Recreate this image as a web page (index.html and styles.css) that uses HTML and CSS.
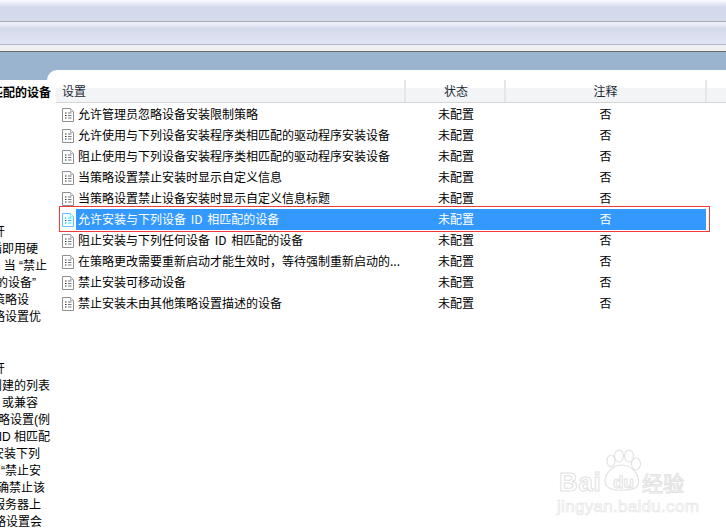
FILE: index.html
```html
<!DOCTYPE html>
<html lang="zh-CN">
<head>
<meta charset="utf-8">
<title>设备安装限制</title>
<link rel="stylesheet" href="styles.css">
</head>
<body>
<svg class="defs" width="0" height="0" aria-hidden="true">
  <symbol id="doc" viewBox="0 0 12 14">
    <path d="M.5.5H8.5L11.5 3.5V13.5H.5Z" fill="#fff" stroke="#8f8f8f"/>
    <path d="M8.5.5V3.5H11.5" fill="#e8e8e8" stroke="#b5b5b5"/>
    <path d="M3 5h1.5M3 7.5h1.5M3 10h1.5" stroke="#333"/>
    <path d="M6 5h3.5M6 7.5h3.5M6 10h3.5" stroke="#777"/>
  </symbol>
</svg>
<div class="toolbar-top"></div>
<div class="toolbar-sub"></div>
<div class="strip"></div>
<div class="band"></div>
<div class="content">
  <aside class="left">
    <h2 class="ln lead w51">相匹配的设备</h2>
    <div class="ln w5 gap-a">开</div>
    <div class="ln w38">插即用硬</div>
    <div class="ln w47">当 “禁止</div>
    <div class="ln w36">的设备”</div>
    <div class="ln w29">策略设</div>
    <div class="ln w41">略设置优</div>
    <div class="ln w5 gap-b">开</div>
    <div class="ln w50">创建的列表</div>
    <div class="ln w38">或兼容</div>
    <div class="ln w50">略设置(例</div>
    <div class="ln w50">ID 相匹配</div>
    <div class="ln w40">安装下列</div>
    <div class="ln w41">“禁止安</div>
    <div class="ln w45">确禁止该</div>
    <div class="ln w41">服务器上</div>
    <div class="ln w42">略设置会</div>
  </aside>
  <main class="right">
    <div class="head">
      <div class="hcell hname">设置</div>
      <div class="hcell hmid">状态</div>
      <div class="hcell hnote">注释</div>
      <div class="hcell"></div>
    </div>
    <div class="row"><div class="name"><svg class="doc"><use href="#doc"/></svg><span class="txt">允许管理员忽略设备安装限制策略</span></div><div class="val">未配置</div><div class="val">否</div></div>
    <div class="row"><div class="name"><svg class="doc"><use href="#doc"/></svg><span class="txt">允许使用与下列设备安装程序类相匹配的驱动程序安装设备</span></div><div class="val">未配置</div><div class="val">否</div></div>
    <div class="row"><div class="name"><svg class="doc"><use href="#doc"/></svg><span class="txt">阻止使用与下列设备安装程序类相匹配的驱动程序安装设备</span></div><div class="val">未配置</div><div class="val">否</div></div>
    <div class="row"><div class="name"><svg class="doc"><use href="#doc"/></svg><span class="txt">当策略设置禁止安装时显示自定义信息</span></div><div class="val">未配置</div><div class="val">否</div></div>
    <div class="row"><div class="name"><svg class="doc"><use href="#doc"/></svg><span class="txt">当策略设置禁止设备安装时显示自定义信息标题</span></div><div class="val">未配置</div><div class="val">否</div></div>
    <div class="row selected">
      <div class="name"><svg class="doc"><use href="#doc"/></svg><span class="txt">允许安装与下列设备 ID 相匹配的设备</span></div><div class="val">未配置</div><div class="val">否</div>
      <div class="marker"></div>
    </div>
    <div class="row"><div class="name"><svg class="doc"><use href="#doc"/></svg><span class="txt">阻止安装与下列任何设备 ID 相匹配的设备</span></div><div class="val">未配置</div><div class="val">否</div></div>
    <div class="row"><div class="name"><svg class="doc"><use href="#doc"/></svg><span class="txt">在策略更改需要重新启动才能生效时，等待强制重新启动的...</span></div><div class="val">未配置</div><div class="val">否</div></div>
    <div class="row"><div class="name"><svg class="doc"><use href="#doc"/></svg><span class="txt">禁止安装可移动设备</span></div><div class="val">未配置</div><div class="val">否</div></div>
    <div class="row"><div class="name"><svg class="doc"><use href="#doc"/></svg><span class="txt">禁止安装未由其他策略设置描述的设备</span></div><div class="val">未配置</div><div class="val">否</div></div>
  </main>
</div>
<div class="watermark">
  <span class="wm-bai">Bai</span>
  <svg class="wm-paw" viewBox="0 0 40 44" aria-hidden="true">
    <g fill="#fff" stroke="#e2e2e2" stroke-width="1.2">
      <ellipse cx="9" cy="12" rx="4" ry="6"/>
      <ellipse cx="17" cy="7" rx="4.5" ry="6"/>
      <ellipse cx="27" cy="7" rx="4.5" ry="6"/>
      <ellipse cx="34" cy="15" rx="4.5" ry="6"/>
      <path d="M20 16C30 16 39 27 36 36C33 43 8 43 4 36C0 27 10 16 20 16Z"/>
    </g>
  </svg>
  <span class="wm-du">du</span>
  <span class="wm-cn">经验</span>
  <span class="wm-url">jingyan.baidu.com</span>
</div>
</body>
</html>
```
FILE: styles.css
```css
* { box-sizing: border-box; }
html, body { margin: 0; padding: 0; }
body {
  width: 726px;
  height: 528px;
  overflow: hidden;
  position: relative;
  background: #fff;
  color: #000;
  font: 12px/17px "Noto Sans CJK SC", "Liberation Sans", sans-serif;
}
.defs { position: absolute; }
.toolbar-top {
  height: 22px;
  background: linear-gradient(#fbfcfe 0, #d4daec 7px, #d4daec 21px);
  border-bottom: 1px solid #a9a9ae;
}
.toolbar-sub {
  height: 23px;
  background: linear-gradient(#f2f4fa, #d5daec 30%, #e0e4f2);
  border-bottom: 1px solid #b2b6cf;
}
.strip {
  height: 7px;
  background: #f0f0f0;
  border-bottom: 1px solid #6c6c6c;
}
.band { height: 18px; background: #9ab4d0; }
.content {
  display: flex;
  height: 476px;
  background: #9ab4d0;
}
.left {
  position: relative;
  z-index: 1;
  width: 47px;
  margin-top: 10px;
  padding-top: 5px;
  background: #fff;
  flex: none;
  font-family: "Liberation Sans", "Noto Sans CJK SC", sans-serif;
}
.ln {
  display: flex;
  justify-content: flex-end;
  height: 17px;
  overflow: hidden;
  white-space: pre;
}
.lead { margin: 0; font-size: 12px; font-weight: 700; line-height: 17px; }
.gap-a { margin-top: 122px; }
.gap-b { margin-top: 35px; }
.w5 { width: 5px; }
.w29 { width: 29px; }
.w36 { width: 36px; }
.w38 { width: 38px; }
.w40 { width: 40px; }
.w41 { width: 41px; }
.w42 { width: 42px; }
.w45 { width: 45px; }
.w47 { width: 47px; }
.w50 { width: 50px; }
.w51 { width: 51px; }
.right {
  flex: 1;
  padding: 10px 0 0 9px;
  background: #fff;
  border-top-left-radius: 10px;
}
.head {
  display: grid;
  grid-template-columns: 350px 100px 201px 1fr;
  height: 23px;
  border-bottom: 1px solid #d5d5d5;
  background: linear-gradient(#fff 0, #fff 8px, #f3f4f6 8px);
  margin-bottom: 1px;
}
.hcell {
  border-right: 2px solid #e6e6e8;
  line-height: 21px;
  color: #1c2a38;
}
.hcell:last-child { border-right: 0; }
.hname { padding-left: 6px; }
.hmid { text-align: center; padding-left: 2px; }
.hnote { text-align: center; }
.row {
  position: relative;
  display: grid;
  grid-template-columns: 350px 100px 199px;
  height: 21px;
  line-height: 19px;
}
.name { display: flex; align-items: flex-start; padding-left: 6px; white-space: nowrap; }
.doc { width: 12px; height: 14px; flex: none; margin: 4px 4px 0 0; }
.txt { word-spacing: 2px; }
.val { text-align: center; }
.selected { background: linear-gradient(90deg, #fff 20px, #3399ff 20px); color: #fff; width: 650px; }
.selected .doc { opacity: .95; filter: sepia(1) hue-rotate(170deg) saturate(3); }
.marker {
  position: absolute;
  left: 3px;
  top: -3px;
  width: 651px;
  height: 26px;
  border: 1px solid #ee3a3a;
  pointer-events: none;
}
.watermark {
  position: absolute;
  left: 555px;
  top: 448px;
  width: 136px;
  height: 68px;
}
.wm-bai, .wm-du, .wm-cn, .wm-url {
  position: absolute;
  color: #fff;
  -webkit-text-stroke: 1px #e2e2e2;
  font-family: "Liberation Sans", sans-serif;
  white-space: nowrap;
}
.wm-bai { left: 4px; top: 20px; font-size: 26px; line-height: 28px; font-weight: 700; letter-spacing: .6px; }
.wm-paw { position: absolute; left: 47px; top: 1px; width: 40px; height: 44px; }
.wm-du { left: 58px; top: 26px; font-size: 17px; line-height: 17px; font-weight: 700; }
.wm-cn { left: 87px; top: 22px; font-family: "Noto Sans CJK SC", sans-serif; font-size: 21px; line-height: 24px; }
.wm-url { left: 2px; top: 50px; font-size: 17px; line-height: 17px; letter-spacing: .3px; -webkit-text-stroke: .7px #e6e6e6; }
```
